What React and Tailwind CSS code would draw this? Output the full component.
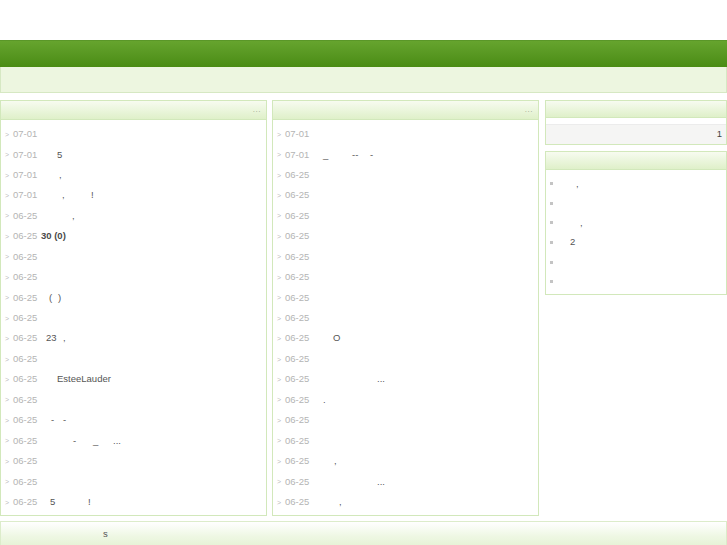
import React from "react";

const leftRows = [
  ["07-01", []],
  ["07-01", [[57, "5"]]],
  ["07-01", [[59, ","]]],
  ["07-01", [[62, ","], [91, "!"]]],
  ["06-25", [[72, ","]]],
  ["06-25", [[41, "30 (0)", true]]],
  ["06-25", []],
  ["06-25", []],
  ["06-25", [[49, "("], [58, ")"]]],
  ["06-25", []],
  ["06-25", [[46, "23"], [63, ","]]],
  ["06-25", []],
  ["06-25", [[57, "EsteeLauder"]]],
  ["06-25", []],
  ["06-25", [[51, "-"], [63, "-"]]],
  ["06-25", [[73, "-"], [93, "_"], [113, "..."]]],
  ["06-25", []],
  ["06-25", []],
  ["06-25", [[50, "5"], [88, "!"]]],
];

const midRows = [
  ["07-01", []],
  ["07-01", [[51, "_"], [80, "--"], [98, "-"]]],
  ["06-25", []],
  ["06-25", []],
  ["06-25", []],
  ["06-25", []],
  ["06-25", []],
  ["06-25", []],
  ["06-25", []],
  ["06-25", []],
  ["06-25", [[61, "O"]]],
  ["06-25", []],
  ["06-25", [[105, "..."]]],
  ["06-25", [[51, "."]]],
  ["06-25", []],
  ["06-25", []],
  ["06-25", [[62, ","]]],
  ["06-25", [[105, "..."]]],
  ["06-25", [[67, ","]]],
];

const sideRows = [
  [[30, ","]],
  [],
  [[34, ","]],
  [[24, "2"]],
  [],
  [],
];

function Pieces({ pieces, start }) {
  if (!pieces.length) return null;
  const out = [];
  out.push(
    <span key="sp" className="inline-block" style={{ width: pieces[0][0] - start }} />
  );
  pieces.forEach((p, i) => {
    const next = pieces[i + 1];
    out.push(
      <span
        key={i}
        className={"inline-block whitespace-pre " + (p[2] ? "font-bold text-[#4a4a4a]" : "text-[#555]")}
        style={next ? { width: next[0] - p[0] } : undefined}
      >
        {p[1]}
      </span>
    );
  });
  return <>{out}</>;
}

function ListPanel({ rows }) {
  return (
    <div className="flex flex-col border border-[#d2e8bb] bg-white h-[416px]">
      <div className="h-[19px] border-b border-[#d2e8bb] bg-gradient-to-b from-[#f7fbf0] to-[#dff0c9] flex items-center justify-end pr-[5px]">
        <span className="text-[8px] leading-none text-[#9aa58f] tracking-[0.5px]">...</span>
      </div>
      <div className="pt-[4px] flex flex-col">
        {rows.map(([d, pieces], i) => (
          <div key={i} className="h-[20.44px] flex items-center text-[9.5px] whitespace-nowrap">
            <span className="w-[12px] pl-[4px] text-[7px] text-[#bdbdbd] leading-none">&gt;</span>
            <span className="w-[28px] text-[#b4b4b4]">{d}</span>
            <span className="flex items-center">
              <Pieces pieces={pieces} start={41} />
            </span>
          </div>
        ))}
      </div>
    </div>
  );
}

export default function App() {
  return (
    <div
      className="w-[727px] h-[545px] overflow-hidden bg-white"
      style={{ fontFamily: '"Liberation Sans", Arial, sans-serif' }}
    >
      <div className="h-[40px]" />
      <div className="h-[27px] border-t border-[#5a9728] bg-gradient-to-b from-[#66a42e] to-[#4a8c13]" />
      <div className="h-[26px] bg-[#edf6e0] border-x border-b border-[#d6e8c3]" />
      <div className="h-[7px]" />
      <div className="flex items-start">
        <div className="w-[267px]">
          <ListPanel rows={leftRows} />
        </div>
        <div className="w-[267px] ml-[5px]">
          <ListPanel rows={midRows} />
        </div>
        <div className="w-[182px] ml-[6px] flex flex-col gap-[6px]">
          <div className="border border-[#d2e8bb] bg-white">
            <div className="h-[17px] border-b border-[#d2e8bb] bg-gradient-to-b from-[#f7fbf0] to-[#dff0c9]" />
            <div className="pt-[6px]">
              <div className="h-[20px] bg-[#f5f5f4] border-t border-[#ececec] flex items-center justify-end pr-[4px] text-[9.5px] text-[#444]">
                1
              </div>
            </div>
          </div>
          <div className="border border-[#d2e8bb] bg-white">
            <div className="h-[18px] border-b border-[#d2e8bb] bg-gradient-to-b from-[#f7fbf0] to-[#dff0c9]" />
            <div className="pt-[4px] pb-[2px] flex flex-col">
              {sideRows.map((pieces, i) => (
                <div key={i} className="h-[19.6px] flex items-center text-[9.5px] whitespace-nowrap">
                  <span className="ml-[4px] w-[3px] h-[3px] bg-[#c4c4c4]" />
                  <span className="w-[6px]" />
                  <span className="flex items-center">
                    <Pieces pieces={pieces} start={13} />
                  </span>
                </div>
              ))}
            </div>
          </div>
        </div>
      </div>
      <div className="h-[5px]" />
      <div className="h-[30px] border-x border-t border-[#dcecca] bg-gradient-to-b from-[#ffffff] via-[#eef7e3] to-[#e2f1cf] flex items-start pt-[5px] text-[9.5px] text-[#555]">
        <span className="ml-[102px]">s</span>
      </div>
    </div>
  );
}
